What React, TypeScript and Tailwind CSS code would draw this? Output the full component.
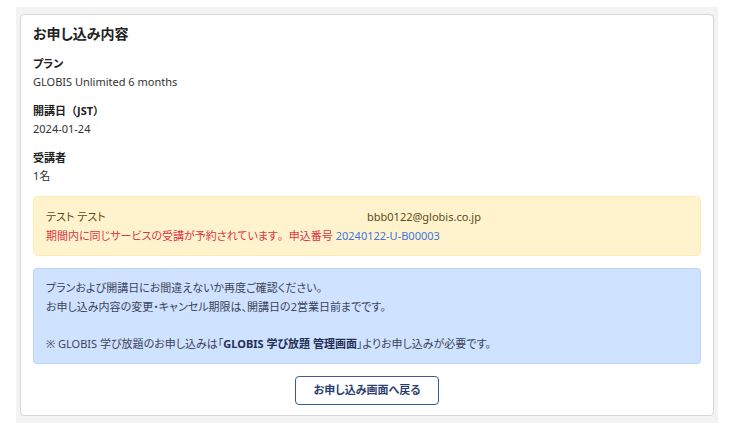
export default function App() {
  return (
    <div
      className="w-[736px] h-[432px] bg-white pl-4 pr-[18px] pt-[7px] pb-[9px] text-[11px] text-[#333333] [font-feature-settings:'palt']"
      style={{ fontFamily: '"Noto Sans", "Noto Sans CJK JP", sans-serif' }}
    >
      <div className="h-full bg-[#f3f3f3] pt-[7px] px-1 pb-[7px]">
        <div className="h-full bg-white border border-[#d6d6d6] rounded-[4px] px-3 pt-[8px]">
          <h2 className="text-[14px] font-bold leading-[22px] text-[#222]">お申し込み内容</h2>

          <dl className="mt-[10px] flex flex-col gap-[11px]">
            <div>
              <dt className="font-bold leading-[18px] text-[#222]">プラン</dt>
              <dd className="leading-[18px]">GLOBIS Unlimited 6 months</dd>
            </div>
            <div>
              <dt className="font-bold leading-[18px] text-[#222] [font-feature-settings:normal]">開講日（JST）</dt>
              <dd className="leading-[18px]">2024-01-24</dd>
            </div>
            <div>
              <dt className="font-bold leading-[18px] text-[#222]">受講者</dt>
              <dd className="leading-[18px]">1名</dd>
            </div>
          </dl>

          <div className="mt-[11px] bg-[#fff3cd] border border-[#ffecb5] rounded-[4px] px-3 py-[10px]">
            <div className="grid grid-cols-2 h-[19px] leading-[19px] text-[#5e4a14]">
              <span>テスト テスト</span>
              <span>bbb0122@globis.co.jp</span>
            </div>
            <div className="h-[19px] leading-[19px] text-[#dc3545]">
              期間内に同じサービスの受講が予約されています<span className="[font-feature-settings:normal]">。</span>申込番号{' '}
              <a className="text-[#3d74e0]">20240122-U-B00003</a>
            </div>
          </div>

          <div className="mt-3 bg-[#cfe2ff] border border-[#b6d4fe] rounded-[4px] px-3 py-[10px] text-[#3b4458]">
            <p className="h-[18.5px] leading-[18.5px]">プランおよび開講日にお間違えないか再度ご確認ください。</p>
            <p className="h-[18.5px] leading-[18.5px]">お申し込み内容の変更・キャンセル期限は、開講日の2営業日前までです。</p>
            <p className="h-[18.5px] leading-[18.5px] mt-[18.5px]">
              ※ GLOBIS 学び放題のお申し込みは「<span className="font-bold text-[#1f2f55]">GLOBIS 学び放題 管理画面</span>」よりお申し込みが必要です。
            </p>
          </div>

          <div className="mt-3 flex justify-center">
            <button className="w-[144px] h-[29px] border border-[#3a5a99] rounded-[4px] text-[11px] font-semibold text-[#2a3f70] bg-white">
              お申し込み画面へ戻る
            </button>
          </div>
        </div>
      </div>
    </div>
  )
}
